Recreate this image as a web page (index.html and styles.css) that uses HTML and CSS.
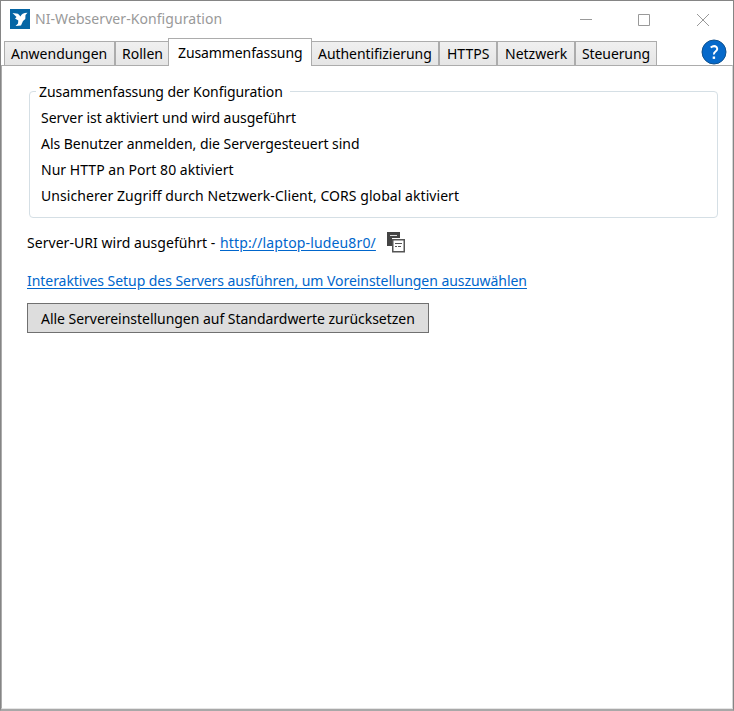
FILE: index.html
```html
<!DOCTYPE html>
<html lang="de">
<head>
<meta charset="utf-8">
<title>NI-Webserver-Konfiguration</title>
<link rel="stylesheet" href="styles.css">
</head>
<body>
<div class="window">
  <header class="titlebar">
    <svg class="logo" width="20" height="20" viewBox="0 0 20 20"><rect width="20" height="20" fill="#0566a5"/><path d="M2.500 4L8 4.800L10.500 7.500Q11.500 4 17.500 3.800L15.500 6L15.300 10L13 12L11 16.500L5.500 17L8 14.500L8.300 11.500L5 9.500L6.500 8Z" fill="#fff"/></svg>
    <span class="title">NI-Webserver-Konfiguration</span>
    <svg class="controls" width="131" height="16" viewBox="0 0 131 16" fill="none" stroke="#999"><path d="M1 8.500H13M59.500 3.500H70.500V14.500H59.500ZM118 3L130 15M130 3L118 15"/></svg>
  </header>
  <nav class="tabs">
    <span class="tab t1">Anwendungen</span>
    <span class="tab t2">Rollen</span>
    <span class="tab active">Zusammenfassung</span>
    <span class="tab t4">Authentifizierung</span>
    <span class="tab t5">HTTPS</span>
    <span class="tab t6">Netzwerk</span>
    <span class="tab t7">Steuerung</span>
    <svg class="help" width="26" height="26" viewBox="0 0 26 26"><circle cx="13" cy="13" r="12" fill="#0669ca" stroke="#11518d"/><path d="M9.700 8.500Q13 6 15.500 8Q17.300 10.500 14.500 12.500Q12.700 13.700 13 15.500" fill="none" stroke="#fff" stroke-width="2"/><rect x="11.700" y="17.500" width="2.400" height="2.400" fill="#fff"/></svg>
  </nav>
  <main class="panel">
    <section class="group">
      <h2 class="legend"><span class="l0">Zusammenfassung der Konfiguration</span></h2>
      <p><span class="l1">Server ist aktiviert und wird ausgeführt</span></p>
      <p><span class="l2">Als Benutzer anmelden, die Servergesteuert sind</span></p>
      <p><span class="l3">Nur HTTP an Port 80 aktiviert</span></p>
      <p><span class="l4">Unsicherer Zugriff durch Netzwerk-Client, CORS global aktiviert</span></p>
    </section>
    <div class="uri">
      <span class="label">Server-URI wird ausgeführt -</span>
      <a class="address">http://laptop-ludeu8r0/</a>
      <svg class="copy" width="19" height="21" viewBox="0 0 19 21"><path d="M0 0H13V6H5V14H0Z" fill="#444"/><path d="M3 3.500H10" stroke="#ddd"/><rect x="5.750" y="7.750" width="11.500" height="12" fill="#fff" stroke="#555" stroke-width="1.500"/><path d="M8 11.500H15M8 14.500H10M11 14.500H14" stroke="#555"/></svg>
    </div>
    <a class="setup">Interaktives Setup des Servers ausführen, um Voreinstellungen auszuwählen</a>
    <button class="reset"><span>Alle Servereinstellungen auf Standardwerte zurücksetzen</span></button>
  </main>
</div>
</body>
</html>
```
FILE: styles.css
```css
* { box-sizing: border-box; }
body {
  margin: 0;
  font: 14px/20px "Noto Sans", sans-serif;
  color: #000;
}
.window {
  width: 734px;
  height: 711px;
  display: flex;
  flex-direction: column;
  border: 1px solid #858585;
  border-bottom: 2px solid #a8a8a8;
  background: #fff;
  white-space: nowrap;
}
.titlebar {
  height: 36px;
  display: flex;
  align-items: center;
  padding: 0 23px 0 9px;
}
.title { margin-left: 5px; color: #999; letter-spacing: 0.07px; }
.controls { margin-left: auto; }
.tabs {
  height: 28px;
  display: flex;
  align-items: flex-end;
  padding-left: 3px;
  flex: none;
}
.tab {
  height: 24px;
  border: 1px solid #acacac;
  border-bottom: 0;
  background: linear-gradient(#f0f0f0, #e5e5e5);
  padding: 2px 0 0 6px;
  flex: none;
}
.t1 { width: 111px; }
.t2 { width: 54px; }
.active {
  width: 144px;
  height: 28px;
  padding: 4px 0 0 9px;
  margin: 0 -1px -1px;
  background: #fff;
  position: relative;
  letter-spacing: -0.1px;
}
.t4 { width: 128px; letter-spacing: -0.06px; }
.t5 { width: 58px; padding-left: 7px; }
.t6 { width: 78px; padding-left: 7px; }
.t7 { width: 82px; letter-spacing: -0.1px; }
.help { margin: 0 6px 0 auto; }
.panel {
  flex: 1;
  border: 1px solid #acacac;
  border-right-color: #d5d5d5;
  border-bottom-color: #e5e5e5;
  padding: 25px 13px 0 25px;
  display: flex;
  flex-direction: column;
  align-items: flex-start;
}
.group {
  width: 689px;
  height: 127px;
  margin-left: 2px;
  border: 1px solid #d5dfe5;
  border-radius: 4px;
  padding-left: 11px;
}
.legend {
  width: 254px;
  height: 20px;
  margin: -10px 0 6px -5px;
  padding-left: 3px;
  background: #fff;
  font: inherit;
}
.l0 { letter-spacing: -0.07px; }
.l1 { letter-spacing: -0.04px; }
.l2 { letter-spacing: -0.04px; }
.l3 { letter-spacing: 0.03px; }
.l4 { letter-spacing: 0.06px; }
.group p { margin: 0 0 6px; }
.uri {
  display: flex;
  align-items: center;
  height: 21px;
  margin-top: 14px;
}
.label { width: 193px; letter-spacing: 0.04px; }
.address { width: 156px; letter-spacing: 0.14px; }
.copy { margin-left: 11px; }
a {
  color: #0066cc;
  text-decoration: underline;
  text-underline-offset: 2px;
}
.setup { margin-top: 18px; letter-spacing: -0.05px; }
.reset {
  width: 402px;
  height: 30px;
  margin-top: 12px;
  padding: 2px 0 0 13px;
  border: 1px solid #707070;
  background: #ddd;
  color: #000;
  font: inherit;
  letter-spacing: -0.03px;
  text-align: left;
}
```
